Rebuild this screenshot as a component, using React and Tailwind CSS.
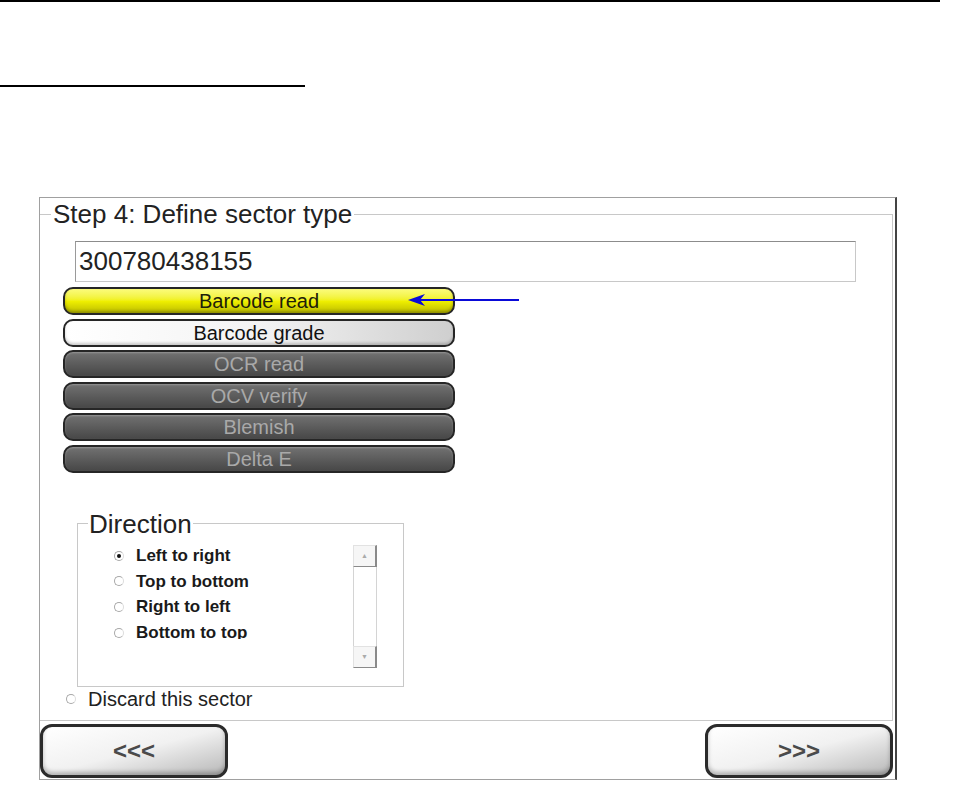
import React from "react";

const font = { fontFamily: '"Liberation Sans", Arial, sans-serif' };

function Radio({ checked }) {
  return (
    <span className="w-[10px] h-[10px] shrink-0 rounded-full border border-[#a8a8a8] border-r-[#dcdcdc] bg-white flex items-center justify-center">
      {checked && <span className="w-[4px] h-[4px] rounded-full bg-[#111]" />}
    </span>
  );
}

function Pill({ label, kind }) {
  const styles = {
    yellow:
      "bg-linear-to-b from-[#fbfb7a] via-[#f0f000] to-[#bcbc00] text-[#20200a] shadow-[inset_0_-2px_3px_rgba(0,0,0,0.25)]",
    white:
      "bg-linear-to-r from-white via-[#f3f3f3] to-[#cfcfcf] text-[#111] shadow-[inset_0_-2px_3px_rgba(0,0,0,0.2)]",
    gray:
      "bg-linear-to-b from-[#727272] via-[#5c5c5c] to-[#474747] text-[#a9a9a9] shadow-[inset_0_1px_2px_rgba(255,255,255,0.25)]",
  };
  return (
    <div
      className={
        "h-[28px] w-[392px] rounded-[10px] border-2 border-[#262626] flex items-center justify-center text-[20px] leading-none " +
        styles[kind]
      }
    >
      {label}
    </div>
  );
}

function NavButton({ label }) {
  return (
    <div className="w-[188px] h-[54px] rounded-[12px] border-[3px] border-[#2b2b2b] bg-linear-to-br from-white via-[#f1f1f1] to-[#b8b8b8] shadow-[inset_0_-3px_4px_rgba(0,0,0,0.25)] flex items-center justify-center text-[24px] font-bold text-[#4a4a4a]">
      {label}
    </div>
  );
}

export default function App() {
  const directions = [
    { label: "Left to right", checked: true },
    { label: "Top to bottom" },
    { label: "Right to left" },
    { label: "Bottom to top" },
  ];

  return (
    <div className="w-[955px] h-[789px] bg-white overflow-hidden" style={font}>
      {/* page rules */}
      <div className="h-[2px] w-[940px] bg-black" />
      <div className="mt-[83px] h-[2px] w-[305px] bg-black" />

      {/* dialog */}
      <div className="mt-[110px] ml-[39px] w-[858px] h-[583px] border-l border-t border-b border-[#a0a0a0] border-r-2 border-r-[#444] relative flex flex-col">
        <fieldset className="mt-[3px] mr-[2px] h-[520px] border-t border-r border-b border-[#c8c8c8]">
          <legend className="ml-[11px] px-[2px] text-[26px] leading-[26px] text-[#222]">
            Step 4: Define sector type
          </legend>

          <div className="mt-[14px] ml-[35px] w-[781px] h-[41px] border border-[#c8c8c8] border-t-[#8c8c8c] border-l-[#9a9a9a] flex items-center pl-[3px] text-[26px] text-[#222]">
            300780438155
          </div>

          <div className="mt-[5px] ml-[23px] flex flex-col gap-[3.6px]">
            <Pill label="Barcode read" kind="yellow" />
            <Pill label="Barcode grade" kind="white" />
            <Pill label="OCR read" kind="gray" />
            <Pill label="OCV verify" kind="gray" />
            <Pill label="Blemish" kind="gray" />
            <Pill label="Delta E" kind="gray" />
          </div>

          <fieldset className="mt-[38px] ml-[37px] w-[327px] h-[176px] border border-[#c8c8c8]">
            <legend className="ml-[10px] px-[1px] text-[26px] leading-[26px] text-[#222]">
              Direction
            </legend>
            <div className="flex items-start">
              <div className="ml-[36px] mt-[6px] w-[230px] h-[96px] overflow-hidden">
                {directions.map((d) => (
                  <div key={d.label} className="h-[25.6px] flex items-center">
                    <Radio checked={d.checked} />
                    <span className="ml-[12px] text-[17px] font-bold text-[#1a1a1a] leading-none">
                      {d.label}
                    </span>
                  </div>
                ))}
              </div>
              <div className="ml-[9px] mt-[8px] w-[24px] h-[123px] flex flex-col">
                <div className="h-[22px] border-l border-t border-[#e2e2e2] border-r-2 border-b border-r-[#8a8a8a] border-b-[#8a8a8a] bg-[#f6f6f6] flex items-center justify-center text-[7px] text-[#aaa]">
                  ▲
                </div>
                <div className="flex-1 border-l border-r border-[#d4d4d4] bg-white" />
                <div className="h-[22px] border-l border-t border-[#e2e2e2] border-r-2 border-b border-r-[#8a8a8a] border-b-[#8a8a8a] bg-[#f6f6f6] flex items-center justify-center text-[7px] text-[#aaa]">
                  ▼
                </div>
              </div>
            </div>
          </fieldset>

          <div className="mt-[1px] h-[22px] flex items-center">
            <span className="ml-[26px]">
              <Radio />
            </span>
            <span className="ml-[12px] text-[20px] text-[#222] leading-none">
              Discard this sector
            </span>
          </div>
        </fieldset>

        <div className="mt-[3px] mr-[2px] flex justify-between">
          <NavButton label="<<<" />
          <NavButton label=">>>" />
        </div>

        {/* annotation arrow */}
        <svg
          className="absolute left-[368px] top-[95px]"
          width="112"
          height="14"
          viewBox="0 0 112 14"
        >
          <line x1="10" y1="7" x2="111" y2="7" stroke="#0a0ad8" strokeWidth="2" />
          <path d="M0 7 L17 1 L12 7 L17 13 Z" fill="#0a0ad8" />
        </svg>
      </div>
    </div>
  );
}
